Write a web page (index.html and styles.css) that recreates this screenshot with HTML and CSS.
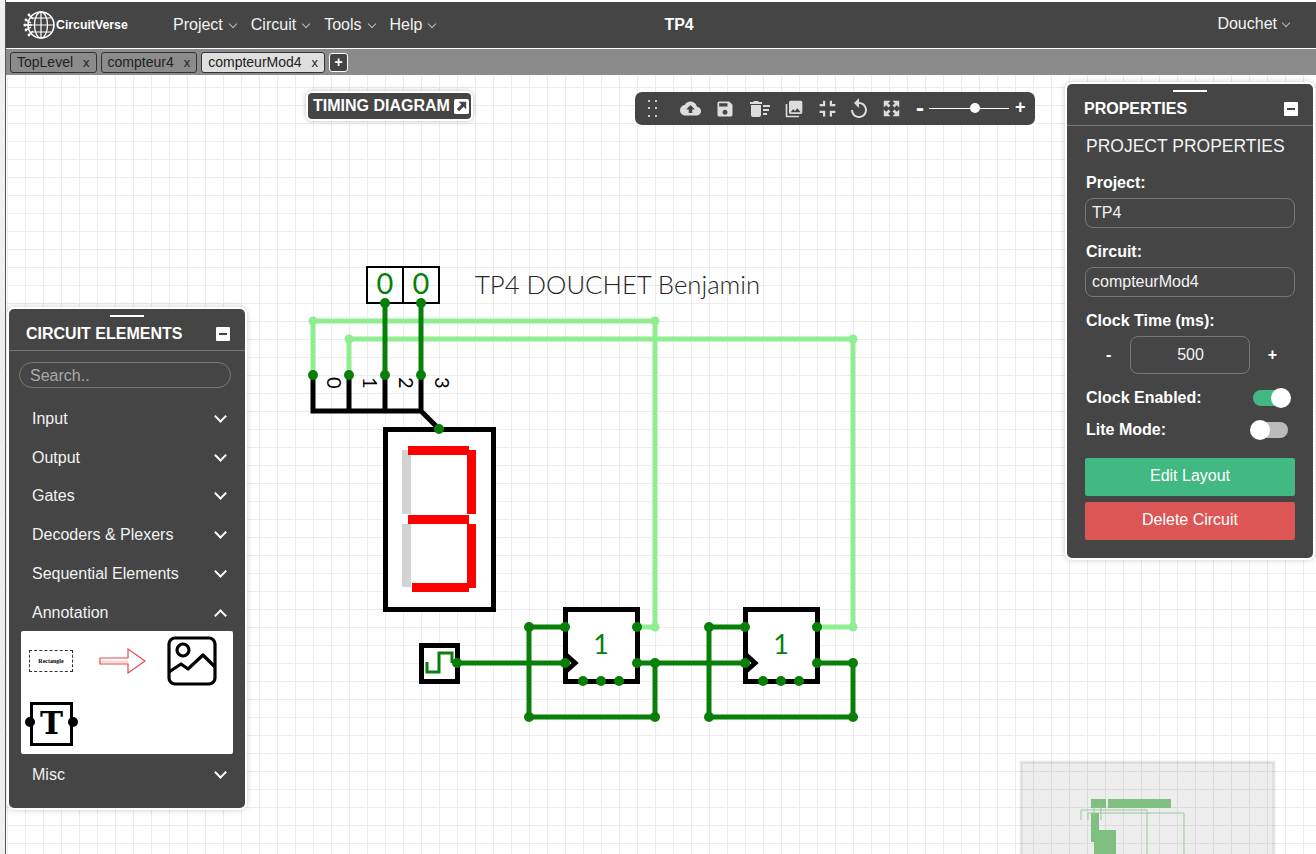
FILE: index.html
```html
<!DOCTYPE html>
<html lang="en">
<head>
<meta charset="UTF-8">
<title>TP4 - CircuitVerse</title>
<link rel="stylesheet" href="styles.css">
</head>
<body>
<div class="strip"></div>
<div class="app">
    <nav class="navbar">
        <div class="logo">
            <svg width="32" height="32" viewBox="0 0 32 32" fill="none" stroke="#fff">
                <circle cx="18" cy="16" r="13" stroke-width="1.6"/>
                <ellipse cx="18" cy="16" rx="6.500" ry="13" stroke-width="1.3"/>
                <path d="M18 3v26M6 16h25M8 9h20M8 23h20" stroke-width="1.2"/>
                <path d="M2 16h7M3 11l5 3M3 21l5-3M6 6l4 4M6 26l4-4" stroke-width="1.4"/>
                <g fill="#fff" stroke="none"><circle cx="2" cy="16" r="1.6"/><circle cx="3" cy="11" r="1.4"/><circle cx="3" cy="21" r="1.4"/><circle cx="6" cy="6" r="1.4"/><circle cx="6" cy="26" r="1.4"/></g>
            </svg>
            <span>CircuitVerse</span>
        </div>
        <ul class="menu">
            <li>Project<i class="caret"></i></li>
            <li>Circuit<i class="caret"></i></li>
            <li>Tools<i class="caret"></i></li>
            <li>Help<i class="caret"></i></li>
        </ul>
        <div class="nav-title">TP4</div>
        <div class="nav-user">Douchet<i class="caret"></i></div>
    </nav>

    <div class="tabs">
        <div class="tab">TopLevel<span>x</span></div>
        <div class="tab">compteur4<span>x</span></div>
        <div class="tab active">compteurMod4<span>x</span></div>
        <div class="tab-add">+</div>
    </div>

    <main class="canvas">
        <!-- le circuit, viewBox en coordonnees de la page -->
        <svg class="circuit" viewBox="6 75 1310 779" width="1310" height="779" fill="none">
            <g class="wire-on">
                <path d="M313 375V321H655V627H637"/>
                <path d="M349 375V339H853V627H817"/>
            </g>
            <g class="wire-black">
                <path d="M313 375V411H421L439 429M349 375V411M385 375V411M421 375V411"/>
            </g>
            <g class="wire-off">
                <path d="M385 303V375M421 303V375"/>
                <path d="M457 663H565M637 663H745"/>
                <path d="M565 627H529V717H655V663"/>
                <path d="M745 627H709V717H853V663H817"/>
            </g>

            <rect class="box-thin" x="367" y="267" width="36" height="36"/>
            <rect class="box-thin" x="403" y="267" width="36" height="36"/>
            <text class="hex" x="385" y="294">0</text>
            <text class="hex" x="421" y="294">0</text>
            <text class="note" x="475" y="294">TP4 DOUCHET Benjamin</text>

            <text class="pin-label" transform="translate(326.500 377) rotate(90)">0</text>
            <text class="pin-label" transform="translate(362.500 377) rotate(90)">1</text>
            <text class="pin-label" transform="translate(398.500 377) rotate(90)">2</text>
            <text class="pin-label" transform="translate(434.500 377) rotate(90)">3</text>

            <!-- afficheur 7 segments -->
            <rect class="box" x="385.500" y="429.500" width="108" height="180"/>
            <rect class="seg-off" x="402" y="450" width="9" height="64"/>
            <rect class="seg-off" x="402" y="524" width="9" height="63"/>
            <rect class="seg-on" x="467" y="450" width="9" height="64"/>
            <rect class="seg-on" x="467" y="524" width="9" height="64"/>
            <rect class="seg-on" x="408" y="446" width="61" height="9"/>
            <rect class="seg-on" x="408" y="515" width="61" height="9"/>
            <rect class="seg-on" x="412" y="583" width="57" height="9"/>

            <!-- horloge -->
            <rect class="box" x="421.500" y="645.500" width="36" height="36"/>
            <path class="clock-wave" d="M427 662V672H439V653H452V663"/>

            <!-- bascules -->
            <rect class="box" x="565.500" y="609.500" width="72" height="72"/>
            <path class="wire-black" d="M565 654L575 663L565 672"/>
            <text class="ff-state" x="601" y="654">1</text>
            <rect class="box" x="745.500" y="609.500" width="72" height="72"/>
            <path class="wire-black" d="M745 654L755 663L745 672"/>
            <text class="ff-state" x="781" y="654">1</text>

            <g class="node-on">
                <circle cx="313" cy="321" r="4.500"/><circle cx="349" cy="339" r="4.500"/>
                <circle cx="655" cy="321" r="4.500"/><circle cx="853" cy="339" r="4.500"/>
                <circle cx="655" cy="627" r="4.500"/><circle cx="853" cy="627" r="4.500"/>
            </g>
            <g class="node-off">
                <circle cx="385" cy="303" r="5"/><circle cx="421" cy="303" r="5"/>
                <circle cx="313" cy="375" r="5"/><circle cx="349" cy="375" r="5"/><circle cx="385" cy="375" r="5"/><circle cx="421" cy="375" r="5"/>
                <circle cx="439" cy="429" r="5"/><circle cx="457" cy="663" r="5"/>
                <circle cx="529" cy="627" r="5"/><circle cx="565" cy="627" r="5"/><circle cx="565" cy="663" r="5"/>
                <circle cx="637" cy="627" r="5"/><circle cx="637" cy="663" r="5"/><circle cx="655" cy="663" r="5"/>
                <circle cx="583" cy="681" r="5"/><circle cx="601" cy="681" r="5"/><circle cx="619" cy="681" r="5"/>
                <circle cx="529" cy="717" r="5"/><circle cx="655" cy="717" r="5"/>
                <circle cx="709" cy="627" r="5"/><circle cx="745" cy="627" r="5"/><circle cx="745" cy="663" r="5"/>
                <circle cx="817" cy="627" r="5"/><circle cx="817" cy="663" r="5"/><circle cx="853" cy="663" r="5"/>
                <circle cx="763" cy="681" r="5"/><circle cx="781" cy="681" r="5"/><circle cx="799" cy="681" r="5"/>
                <circle cx="709" cy="717" r="5"/><circle cx="853" cy="717" r="5"/>
            </g>

            <!-- minimap -->
            <rect class="mini-bg" x="1021" y="762" width="253" height="100"/>
            <g class="mini-fill">
                <rect x="1091" y="799" width="15" height="9"/>
                <rect x="1108" y="799" width="63" height="9"/>
                <rect x="1091" y="813" width="8" height="29"/>
                <rect x="1094" y="830" width="22" height="24"/>
            </g>
            <path class="mini-line" d="M1081 820V810H1147V854M1088 820V813H1184V854M1094 806V820M1101 806V820"/>
        </svg>

        <div class="timing-btn">TIMING DIAGRAM
            <svg width="15" height="15" viewBox="0 0 16 16"><rect width="16" height="16" rx="2" fill="#fff"/><path d="M5 3h8v8l-2.800-2.800-4.800 4.800-2.400-2.400 4.800-4.800z" fill="#454545"/></svg>
        </div>

        <div class="toolbar">
            <svg class="drag" width="9" height="17" viewBox="0 0 9 17" fill="#ccc">
                <rect x="0" y="0" width="2" height="2"/><rect x="7" y="0" width="2" height="2"/>
                <rect x="0" y="7" width="2" height="2"/><rect x="7" y="7" width="2" height="2"/>
                <rect x="0" y="15" width="2" height="2"/><rect x="7" y="15" width="2" height="2"/>
            </svg>
            <div class="tools">
                <svg class="ic-cloud" viewBox="0 0 24 24"><path d="M19.35 10.04C18.67 6.59 15.64 4 12 4 9.11 4 6.6 5.64 5.35 8.04 2.34 8.36 0 10.91 0 14c0 3.31 2.69 6 6 6h13c2.76 0 5-2.24 5-5 0-2.64-2.05-4.78-4.65-4.96zM14 13v4h-4v-4H7l5-5 5 5h-3z"/></svg>
                <svg class="ic-save" viewBox="0 0 24 24"><path d="M17 3H5c-1.11 0-2 .9-2 2v14c0 1.1.89 2 2 2h14c1.1 0 2-.9 2-2V7l-4-4zm-5 16c-1.66 0-3-1.34-3-3s1.34-3 3-3 3 1.34 3 3-1.34 3-3 3zm3-10H5V5h10v4z"/></svg>
                <svg class="ic-trash" viewBox="0 0 24 24"><path d="M15 16h4v2h-4zm0-8h7v2h-7zm0 4h6v2h-6zM3 18c0 1.1.9 2 2 2h6c1.1 0 2-.9 2-2V8H3v10zM14 5h-3l-1-1H6L5 5H2v2h12z"/></svg>
                <svg class="ic-photo" viewBox="0 0 24 24"><path d="M22 16V4c0-1.1-.9-2-2-2H8c-1.1 0-2 .9-2 2v12c0 1.1.9 2 2 2h12c1.1 0 2-.9 2-2zm-11-4l2.03 2.71L16 11l4 5H8l3-4zM2 6v14c0 1.1.9 2 2 2h14v-2H4V6H2z"/></svg>
                <svg class="ic-exit" viewBox="0 0 24 24"><path d="M5 16h3v3h2v-5H5v2zm3-8H5v2h5V5H8v3zm6 11h2v-3h3v-2h-5v5zm2-11V5h-2v5h5V8h-3z"/></svg>
                <svg class="ic-replay" viewBox="0 0 24 24"><path d="M12 5V1L7 6l5 5V7c3.31 0 6 2.69 6 6s-2.69 6-6 6-6-2.69-6-6H4c0 4.42 3.58 8 8 8s8-3.58 8-8-3.58-8-8-8z"/></svg>
                <svg class="ic-full" viewBox="0 0 24 24"><path d="M15 3l2.3 2.3-2.89 2.87 1.42 1.42L18.7 6.7 21 9V3zM3 9l2.3-2.3 2.87 2.89 1.42-1.42L6.7 5.3 9 3H3zm6 12l-2.3-2.3 2.89-2.87-1.42-1.42L5.3 17.3 3 15v6zm12-6l-2.3 2.3-2.87-2.89-1.42 1.42 2.89 2.87L15 21h6z"/></svg>
            </div>
            <div class="zoom-ctrl">
                <span class="zoom-sign minus">-</span>
                <div class="zoom-track"><i class="zoom-thumb"></i></div>
                <span class="zoom-sign">+</span>
            </div>
        </div>

        <aside class="panel panel-elements">
            <div class="panel-handle"></div>
            <div class="panel-head">
                <span>CIRCUIT ELEMENTS</span>
                <i class="minimize"></i>
            </div>
            <div class="search">Search..</div>
            <ul class="accordion">
                <li>Input<i class="chev"></i></li>
                <li>Output<i class="chev"></i></li>
                <li>Gates<i class="chev"></i></li>
                <li>Decoders &amp; Plexers<i class="chev"></i></li>
                <li>Sequential Elements<i class="chev"></i></li>
                <li>Annotation<i class="chev up"></i></li>
            </ul>
            <div class="palette">
                <div class="rect-icon">Rectangle</div>
                <svg class="arrow-icon" width="47" height="26" viewBox="0 0 47 26" fill="none"><path d="M1 10H29V1L46 13L29 25V16H1Z" stroke="#e8474b" stroke-width="1.200" fill="#fff"/><path d="M2 12.500H29V15H2Z" fill="#f8d8d8"/></svg>
                <svg class="image-icon" width="50" height="50" viewBox="0 0 50 50" fill="none" stroke="#000" stroke-width="3.200" stroke-linejoin="round"><rect x="2" y="2" width="46" height="46" rx="6"/><circle cx="16" cy="14" r="6"/><path d="M2 36L14 28L21 33L36 19L48 31"/></svg>
                <div class="text-icon">T</div>
            </div>
            <ul class="accordion">
                <li>Misc<i class="chev"></i></li>
            </ul>
        </aside>

        <aside class="panel panel-props">
            <div class="panel-handle"></div>
            <div class="panel-head">
                <span>PROPERTIES</span>
                <i class="minimize"></i>
            </div>
            <div class="props-body">
                <div class="props-title">PROJECT PROPERTIES</div>
                <label>Project:</label>
                <div class="field">TP4</div>
                <label>Circuit:</label>
                <div class="field">compteurMod4</div>
                <label>Clock Time (ms):</label>
                <div class="stepper">
                    <span>-</span>
                    <div class="field field-num">500</div>
                    <span>+</span>
                </div>
                <div class="switch-row"><label>Clock Enabled:</label><div class="switch on"><i></i></div></div>
                <div class="switch-row lite"><label>Lite Mode:</label><div class="switch"><i></i></div></div>
                <div class="btn btn-green">Edit Layout</div>
                <div class="btn btn-red">Delete Circuit</div>
            </div>
        </aside>
    </main>
</div>
</body>
</html>
```

FILE: styles.css
```css
* {
    box-sizing: border-box;
}
html, body {
    height: 100%;
}
body {
    margin: 0;
    display: flex;
    overflow: hidden;
    background-color: #fff;
    font-family: "Liberation Sans", Arial, sans-serif;
    color: #fff;
}
ul {
    list-style: none;
    margin: 0;
    padding: 0;
}
.strip {
    width: 6px;
    flex: none;
    background-color: #efefef;
    border-right: 1px solid #555;
}
.app {
    flex: 1;
    display: flex;
    flex-direction: column;
    min-width: 0;
    padding-top: 2px;
}

/* barre du haut */
.navbar {
    height: 46px;
    flex: none;
    display: flex;
    align-items: center;
    background-color: #454545;
    padding-right: 25px;
}
.logo {
    display: flex;
    align-items: center;
    width: 167px;
    padding-left: 17px;
    font-size: 12.300px;
    font-weight: bold;
    gap: 1px;
}
.menu {
    display: flex;
    gap: 13px;
    font-size: 16px;
    color: #f2f2f2;
}
.menu li {
    display: flex;
    align-items: center;
}
.caret {
    width: 6px;
    height: 6px;
    margin: -2px 2px 0 7px;
    border-right: 1px solid #bbb;
    border-bottom: 1px solid #bbb;
    transform: rotate(45deg);
}
.nav-title {
    margin-left: 227px;
    font-size: 16px;
    font-weight: bold;
}
.nav-user {
    margin-left: auto;
    display: flex;
    align-items: center;
    font-size: 16px;
    margin-top: -3px;
    color: #f2f2f2;
}
.nav-user .caret {
    margin-left: 6px;
}

/* onglets */
.tabs {
    height: 27px;
    flex: none;
    display: flex;
    align-items: center;
    gap: 4px;
    padding: 0 0 0 4px;
    background-color: #8b8b8b;
    border-top: 1px solid #fff;
}
.tab {
    height: 21px;
    display: flex;
    align-items: center;
    padding: 0 6px;
    background-color: #8b8b8b;
    border: 1px solid #333;
    border-radius: 3px;
    color: #222;
    font-size: 14px;
}
.tab span {
    margin-left: 10px;
    font-size: 13px;
}
.tab.active {
    background-color: #dedede;
}
.tab-add {
    width: 19px;
    height: 19px;
    display: flex;
    align-items: center;
    justify-content: center;
    background-color: #454545;
    border: 1px solid #fff;
    border-radius: 3px;
    font-size: 14px;
    font-weight: bold;
}

/* zone de dessin */
.canvas {
    flex: 1;
    position: relative;
    overflow: hidden;
    background-color: #fff;
    background-image: linear-gradient(to right, #ececec 1px, transparent 1px), linear-gradient(to bottom, #ececec 1px, transparent 1px);
    background-size: 18px 18px;
    background-position: 1px 12px;
}
.circuit {
    position: absolute;
    top: 0;
    left: 0;
    display: block;
}
.wire-on path {
    stroke: #90ee90;
    stroke-width: 5;
}
.wire-off path {
    stroke: #087f08;
    stroke-width: 5;
}
.wire-black,
.wire-black path {
    stroke: #000;
    stroke-width: 5;
}
.node-on {
    fill: #90ee90;
}
.node-off {
    fill: #087f08;
}
.box {
    fill: #fff;
    stroke: #000;
    stroke-width: 5;
}
.box-thin {
    fill: none;
    stroke: #000;
    stroke-width: 2;
}
.seg-on {
    fill: #f00;
}
.seg-off {
    fill: #d3d3d3;
}
.clock-wave {
    stroke: #087f08;
    stroke-width: 3;
}
.hex {
    fill: #087f08;
    font-family: Lato, sans-serif;
    font-size: 29px;
    text-anchor: middle;
}
.note {
    fill: #252525;
    font-family: Lato, sans-serif;
    font-size: 25.700px;
    font-weight: 300;
}
.pin-label {
    fill: #000;
    font-family: Lato, sans-serif;
    font-size: 20px;
}
.ff-state {
    fill: #087f08;
    font-family: Lato, sans-serif;
    font-size: 27px;
    text-anchor: middle;
}
.mini-bg {
    fill: rgba(0, 0, 0, 0.07);
    stroke: rgba(0, 0, 0, 0.08);
    stroke-width: 3;
}
.mini-fill {
    fill: #7fbf7f;
}
.mini-line {
    stroke: #97c997;
    stroke-width: 1;
}

/* bouton timing */
.timing-btn {
    position: absolute;
    left: 302px;
    top: 18px;
    height: 26px;
    width: 163px;
    display: flex;
    align-items: center;
    gap: 4px;
    padding-left: 5px;
    background-color: #454545;
    border-radius: 4px;
    box-shadow: 0 0 0 2px #fff, 0 0 5px 2px rgba(0, 0, 0, 0.25);
    font-size: 16px;
    font-weight: bold;
    white-space: nowrap;
}

/* barre d'outils */
.toolbar {
    position: absolute;
    left: 629px;
    top: 17px;
    width: 400px;
    height: 33px;
    display: flex;
    align-items: center;
    background-color: #454545;
    border-radius: 7px;
}
.drag {
    margin-left: 13px;
}
.tools {
    display: flex;
    align-items: center;
    margin-left: 22.500px;
}
.tools svg {
    flex: none;
    fill: #ddd;
}
.ic-cloud {
    width: 21px;
    height: 21px;
}
.ic-save {
    width: 20px;
    height: 20px;
    margin-left: 14.500px;
}
.ic-trash {
    width: 24px;
    height: 24px;
    margin-left: 13px;
}
.ic-photo {
    width: 20px;
    height: 20px;
    margin-left: 12px;
}
.ic-exit {
    width: 27px;
    height: 27px;
    margin-left: 9.500px;
}
.ic-replay {
    width: 24px;
    height: 24px;
    margin-left: 6.500px;
}
.ic-full {
    width: 19px;
    height: 19px;
    margin-left: 10.500px;
    stroke: #ddd;
    stroke-width: 1.500;
}
.zoom-ctrl {
    display: flex;
    align-items: center;
    margin-left: 15.500px;
}
.zoom-sign {
    font-size: 18px;
    font-weight: bold;
    line-height: 18px;
    margin-top: -3px;
}
.zoom-sign.minus {
    font-size: 24px;
    margin-top: -2px;
}
.zoom-track {
    position: relative;
    width: 80px;
    height: 1px;
    margin: 0 6px 0 5px;
    background-color: #fff;
}
.zoom-thumb {
    position: absolute;
    left: 41px;
    top: -5px;
    width: 10px;
    height: 10px;
    border-radius: 50%;
    background-color: #fff;
}

/* panneaux flottants */
.panel {
    position: absolute;
    background-color: #454545;
    border-radius: 5px;
    box-shadow: 0 0 0 2px #fff, 0 0 6px 2px rgba(0, 0, 0, 0.2);
}
.panel-elements {
    left: 3px;
    top: 234px;
    width: 236px;
    height: 499px;
}
.panel-props {
    left: 1061px;
    top: 9px;
    width: 246px;
    height: 474px;
}
.panel-handle {
    width: 34px;
    height: 2px;
    margin: 6px auto 0;
    background-color: #fff;
}
.panel-head {
    height: 34px;
    display: flex;
    align-items: center;
    justify-content: space-between;
    padding: 0 15px 0 17px;
    border-bottom: 1px solid #777;
    font-size: 16px;
    font-weight: bold;
    margin-bottom: 10px;
}
.panel-elements .panel-head {
    margin-bottom: 11px;
}
.minimize {
    position: relative;
    width: 14px;
    height: 14px;
    background-color: #fff;
    border-radius: 1px;
}
.minimize::before {
    content: '';
    position: absolute;
    left: 3px;
    top: 6px;
    width: 8px;
    height: 2px;
    background-color: #454545;
}
.search {
    height: 26px;
    margin: 0 14px 0 10px;
    padding-left: 10px;
    border: 1px solid #777;
    border-radius: 13px;
    color: #aaa;
    font-size: 16px;
    line-height: 25px;
}
.accordion {
    padding: 0 18px 0 23px;
}
.accordion li {
    height: 38.800px;
    display: flex;
    align-items: center;
    justify-content: space-between;
    font-size: 16px;
    color: #f2f2f2;
}
.panel-elements .search + .accordion {
    margin-top: 11.500px;
}
.chev {
    width: 9px;
    height: 9px;
    margin: -5px 2px 0 0;
    border-right: 2px solid #fff;
    border-bottom: 2px solid #fff;
    transform: rotate(45deg);
}
.chev.up {
    margin-top: 5px;
    transform: rotate(225deg);
}
.palette {
    position: relative;
    height: 123px;
    margin: -1.500px 12px 2px;
    background-color: #fff;
    border-radius: 2px;
    color: #000;
}
.rect-icon {
    position: absolute;
    left: 8px;
    top: 19px;
    width: 44px;
    height: 22px;
    border: 1px dashed #333;
    display: flex;
    align-items: center;
    justify-content: center;
    font-family: "Liberation Serif", serif;
    font-size: 6px;
    font-weight: bold;
}
.arrow-icon {
    position: absolute;
    left: 78px;
    top: 17px;
}
.image-icon {
    position: absolute;
    left: 146px;
    top: 5px;
}
.text-icon {
    position: absolute;
    left: 9px;
    top: 71px;
    width: 43px;
    height: 44px;
    border: 3px solid #000;
    display: flex;
    align-items: center;
    justify-content: center;
    font-family: "DejaVu Serif", serif;
    font-size: 31px;
    font-weight: bold;
    line-height: 1;
}
.text-icon::before,
.text-icon::after {
    content: '';
    position: absolute;
    top: 12px;
    width: 10px;
    height: 10px;
    border-radius: 50%;
    background-color: #000;
}
.text-icon::before {
    left: -8px;
}
.text-icon::after {
    right: -8px;
}

/* proprietes */
.props-body {
    padding: 0 18px 0 19px;
}
.props-title {
    font-size: 17.500px;
    color: #f2f2f2;
    line-height: 20px;
    margin-bottom: 18px;
}
.props-body label {
    display: block;
    font-size: 16px;
    font-weight: bold;
    line-height: 18px;
}
.field {
    height: 30px;
    margin: 6px 0 15px -1px;
    padding-left: 6px;
    border: 1px solid #777;
    border-radius: 8px;
    font-size: 16px;
    line-height: 27px;
    color: #f2f2f2;
}
.stepper {
    display: flex;
    align-items: center;
    justify-content: space-between;
    margin-top: 6px;
    padding: 0 18px 0 20px;
    font-size: 16px;
    font-weight: bold;
}
.field-num {
    width: 120px;
    height: 38px;
    margin: 0 0 0 2px;
    padding: 0;
    text-align: center;
    line-height: 36px;
    font-weight: normal;
}
.switch-row {
    display: flex;
    align-items: center;
    justify-content: space-between;
    height: 20px;
    margin-top: 14px;
}
.switch-row.lite {
    margin-top: 12px;
}
.switch {
    position: relative;
    width: 32px;
    height: 16px;
    margin-right: 7px;
    border-radius: 8px;
    background-color: #bbb;
}
.switch i {
    position: absolute;
    left: -6px;
    top: -2px;
    width: 20px;
    height: 20px;
    border-radius: 50%;
    background-color: #fff;
}
.switch.on {
    width: 34px;
    margin-right: 8px;
    background-color: #42b983;
}
.switch.on i {
    left: 18px;
}
.btn {
    height: 38px;
    margin-left: -1px;
    border-radius: 2px;
    text-align: center;
    font-size: 16px;
    line-height: 36px;
}
.btn-green {
    margin-top: 18px;
    background-color: #42b983;
}
.btn-red {
    margin-top: 6px;
    background-color: #dc5656;
}
```
